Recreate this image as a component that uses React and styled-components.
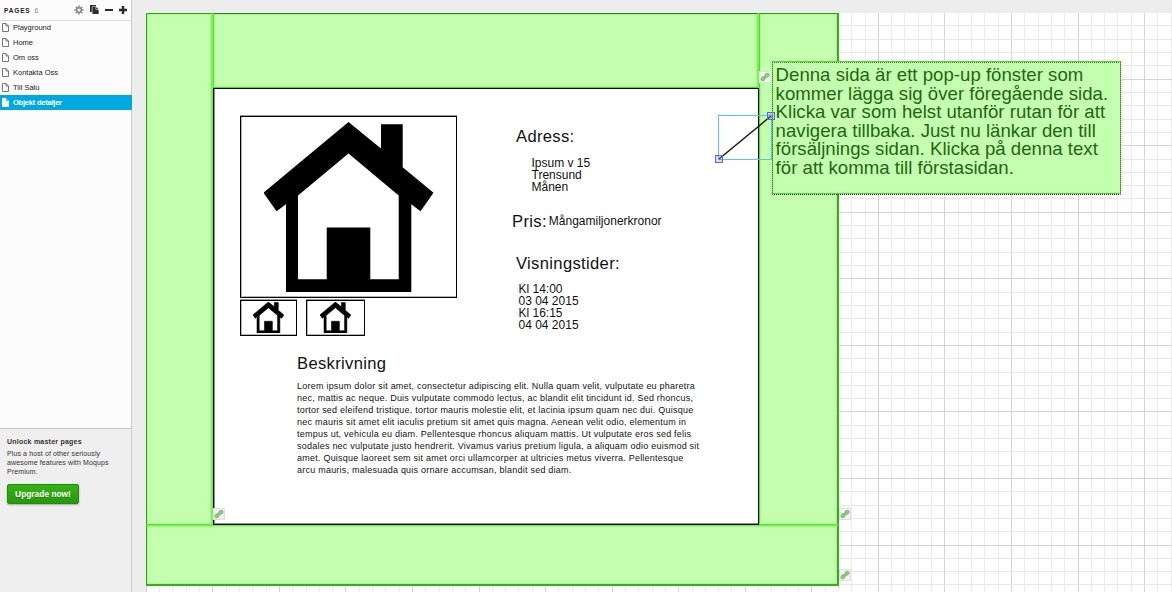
import React from "react";
import styled, { createGlobalStyle } from "styled-components";

const Global = createGlobalStyle`
  * { box-sizing: border-box; }
  body { margin: 0; overflow: hidden; font-family: "Liberation Sans", Arial, sans-serif; }
  svg { display: block; flex: none; }
`;

const Shell = styled.div`
  display: flex;
  width: 1172px;
  height: 592px;
  background: #ededed;
`;

const Sidebar = styled.aside`
  display: flex;
  flex-direction: column;
  width: 132px;
  flex: none;
  background: linear-gradient(to left, #c9c9c9 1px, #fcfcfc 1px);
`;

const SidebarHeader = styled.header`
  display: flex;
  align-items: center;
  height: 21px;
  width: 131px;
  padding: 0 4px 1px 4px;
  border-bottom: 1px solid #dcdcdc;
`;

const HeaderTitle = styled.h1`
  margin: 1px 0 0;
  flex: 1;
  font-size: 6.5px;
  font-weight: bold;
  letter-spacing: 0.85px;
  color: #222;
`;

const PageCount = styled.span`
  margin-left: 4px;
  font-size: 7px;
  font-weight: normal;
  color: #888;
`;

const HeaderTools = styled.div`
  display: flex;
  align-items: center;
  gap: 6px;
`;

const PageList = styled.nav`
  display: flex;
  flex-direction: column;
  flex: 1;
  margin-top: -1px;
`;

const PageRow = styled.a`
  display: flex;
  align-items: center;
  gap: 4px;
  height: 15px;
  padding-left: 2px;
  font-size: 7.5px;
  line-height: 15px;
  white-space: nowrap;
  color: ${(p) => (p.$active ? "#fff" : "#222")};
  font-weight: ${(p) => (p.$active ? "bold" : "normal")};
  letter-spacing: ${(p) => (p.$active ? "-0.22px" : "0")};
  background: ${(p) => (p.$active ? "#00a8e1" : "transparent")};
`;

const Promo = styled.section`
  display: flex;
  flex-direction: column;
  align-items: flex-start;
  width: 131px;
  height: 164px;
  padding: 8px 7px;
  border-top: 1px solid #c9c9c9;
  background: #efefef;
`;

const PromoTitle = styled.h2`
  margin: 0;
  font-size: 7px;
  line-height: 9px;
  letter-spacing: 0.23px;
  color: #333;
`;

const PromoText = styled.p`
  margin: 3px 0 8px;
  font-size: 7px;
  line-height: 9px;
  letter-spacing: 0.11px;
  white-space: pre;
  color: #333;
`;

const UpgradeButton = styled.button`
  width: 72px;
  height: 20px;
  padding: 0;
  border: 1px solid #1f8c0b;
  border-radius: 2px;
  background: linear-gradient(#35b215, #27980c);
  box-shadow: 0 1px 2px rgba(0, 0, 0, 0.3);
  color: #fff;
  font: bold 8.4px/18px "Liberation Sans", Arial, sans-serif;
  text-shadow: 0 1px 0 rgba(0, 0, 0, 0.25);
`;

const Workspace = styled.main`
  flex: 1;
  display: flex;
  padding: 13px 0 0 14px;
  overflow: hidden;
`;

const Canvas = styled.div`
  position: relative;
  flex: 1;
  background: #fff;
`;

const Placed = styled.div`
  position: absolute;
  left: ${(p) => p.$x - 146}px;
  top: ${(p) => p.$y - 13}px;
`;

/* Four clickable areas around the popup. */
const Backdrop = styled.div`
  position: relative;
  display: grid;
  grid-template: 75px 437px 61px / 67px 546px 80px;
  width: 693px;
  height: 573px;
`;

const Hotspot = styled.div`
  grid-area: ${(p) => p.$area};
  background: #c3ffae;
  border-style: solid;
  border-width: ${(p) => p.$bw};
  border-color: ${(p) => p.$bc};
  box-shadow: inset 0 0 0 1px rgba(125, 240, 90, 0.4);
`;

const Popup = styled.article`
  grid-area: 2 / 2;
  display: flex;
  flex-direction: column;
  padding: 27px 26px;
  background: #fff;
  border: 1px solid #000;
  box-shadow: inset 1px -1px 0 #909090;
`;

const Summary = styled.div`
  display: flex;
  gap: 55px;
`;

const Gallery = styled.div`
  display: flex;
  flex-direction: column;
  gap: 2px;
  width: 217px;
`;

const Thumbs = styled.div`
  display: flex;
  gap: 9px;
`;

const Picture = styled.figure`
  display: flex;
  justify-content: center;
  margin: 0;
  width: ${(p) => p.$w}px;
  height: ${(p) => p.$h}px;
  padding-top: ${(p) => p.$pad}px;
  border: 1px solid #000;
  background: #fff;
  box-shadow: 0 -1px 0 #999, inset 1px -1px 0 #b5b5b5;
`;

const Details = styled.div`
  display: flex;
  flex-direction: column;
  height: 220px;
  padding-top: 11px;
`;

const Heading = styled.h2`
  margin: 0;
  padding-left: ${(p) => p.$indent || 0}px;
  font-size: 16.6px;
  font-weight: normal;
  line-height: 20px;
  letter-spacing: 0.33px;
  white-space: nowrap;
  color: #111;
`;

const Detail = styled.p`
  margin: 0;
  padding: ${(p) => p.$pad};
  font-size: 12px;
  line-height: 12px;
  white-space: pre;
  color: #111;
`;

const PriceRow = styled.div`
  display: flex;
  align-items: flex-start;
  gap: 2px;
`;

const Description = styled.section`
  display: flex;
  flex-direction: column;
  gap: 6px;
  margin-top: 18px;
  padding-left: 57px;
`;

const DescriptionText = styled.p`
  margin: 0;
  font-size: 9px;
  line-height: 12px;
  letter-spacing: 0.232px;
  white-space: pre;
  color: #111;
`;

const Note = styled(Placed)`
  width: 349px;
  height: 133px;
  padding: 4px 0 0 2.6px;
  border: 1px solid #4fd92c;
  background: #c3ffae;
  font-size: 18.6px;
  line-height: 18.6px;
  letter-spacing: 0.02px;
  white-space: pre;
  color: #256511;

  &::after {
    content: "";
    position: absolute;
    inset: 0 -1px -2px -1px;
    border: 1px dotted #2c8a1a;
    border-bottom-color: #222;
  }
`;

const Badge = styled(Placed)`
  display: flex;
  align-items: center;
  justify-content: center;
  width: 12px;
  height: 12px;
  border: 1px solid #e0e0e0;
  background: rgba(242, 242, 242, 0.92);
`;

const Overlay = styled.svg`
  position: absolute;
  left: ${(p) => p.$x - 146}px;
  top: ${(p) => p.$y - 13}px;
`;

const HouseDrawing = ({ size }) => (
  <svg width={size} height={size} viewBox="0 0 170 169.5" preserveAspectRatio="none">
    <path
      fillRule="evenodd"
      d="M84.5 0L-.5 70.5L12.5 89L22 82V169.5H147.3V82L156.5 89L169.5 70.5L138.7 45V2.3H117V26.5ZM84.5 31.5L134.7 73.3V156.7H106.3V105.3H62.7V156.7H34V73.3Z"
      stroke="#000"
      strokeWidth={size < 50 ? 3 : 0}
    />
  </svg>
);

const DocIcon = ({ active }) => (
  <svg width="7" height="9" viewBox="0 0 7 9">
    <path
      d="M.5 .5H4L6.5 3V8.5H.5ZM4 .5V3H6.5"
      fill="#fff"
      stroke={active ? "#fff" : "#777"}
      strokeWidth="1"
    />
    {active && <path d="M4 0L7 3H4Z" fill="#00a8e1" opacity=".6" />}
  </svg>
);

const GearIcon = () => (
  <svg width="10" height="10" viewBox="-5 -5 10 10" stroke="#8c8c8c" fill="none">
    <circle r="2.4" strokeWidth="1.6" />
    {[0, 45, 90, 135].map((a) => (
      <g key={a} transform={`rotate(${a})`} strokeWidth="1.3">
        <path d="M0 -4.7V-2.8M0 2.8V4.7" />
      </g>
    ))}
  </svg>
);

const DuplicateIcon = () => (
  <svg width="9" height="9" viewBox="0 0 9 9" fill="#2b2b2b">
    <path d="M0 0H6V1.4H1.8V7H0Z" />
    <path d="M2.4 2H5.6V4.8H8.6V9H2.4Z" />
    <path d="M6.2 2L8.6 4.2H6.2Z" />
  </svg>
);

const MinusIcon = () => (
  <svg width="8" height="8" viewBox="0 0 8 8">
    <path d="M0 3H8V5H0Z" fill="#2b2b2b" />
  </svg>
);

const PlusIcon = () => (
  <svg width="8" height="8" viewBox="0 0 8 8">
    <path d="M0 2.8H2.8V0H5.2V2.8H8V5.2H5.2V8H2.8V5.2H0Z" fill="#2b2b2b" />
  </svg>
);

const LinkBadge = ({ x, y }) => (
  <Badge $x={x} $y={y}>
    <svg width="10" height="10" viewBox="-5 -5 10 10" fill="#a9d09c" stroke="#86bd78" strokeWidth="1.6">
      <g transform="rotate(-42)">
        <rect x="-4.5" y="-1.3" width="3.8" height="2.6" rx="1.3" />
        <rect x="0.7" y="-1.3" width="3.8" height="2.6" rx="1.3" />
        <path d="M-1.8 0H1.8" />
      </g>
    </svg>
  </Badge>
);

const GRID = 13.31;

const Grid = () => (
  <Overlay $x={146} $y={13} width="1026" height="579" shapeRendering="crispEdges">
    {Array.from({ length: 78 }, (_, i) => (
      <rect key={`v${i}`} x={Math.floor(0.3 + i * GRID)} y="0" width="1" height="579" fill={i % 5 ? "#ececec" : "#d4d4d4"} />
    ))}
    {Array.from({ length: 44 }, (_, i) => (
      <rect key={`h${i}`} x="0" y={Math.floor(i * GRID - 0.35)} width="1026" height="1" fill={i % 5 ? "#e8e8e8" : "#d4d4d4"} />
    ))}
  </Overlay>
);

const pages = ["Playground", "Home", "Om oss", "Kontakta Oss", "Till Salu", "Objekt detaljer"];

const description = `Lorem ipsum dolor sit amet, consectetur adipiscing elit. Nulla quam velit, vulputate eu pharetra
nec, mattis ac neque. Duis vulputate commodo lectus, ac blandit elit tincidunt id. Sed rhoncus,
tortor sed eleifend tristique, tortor mauris molestie elit, et lacinia ipsum quam nec dui. Quisque
nec mauris sit amet elit iaculis pretium sit amet quis magna. Aenean velit odio, elementum in
tempus ut, vehicula eu diam. Pellentesque rhoncus aliquam mattis. Ut vulputate eros sed felis
sodales nec vulputate justo hendrerit. Vivamus varius pretium ligula, a aliquam odio euismod sit
amet. Quisque laoreet sem sit amet orci ullamcorper at ultricies metus viverra. Pellentesque
arcu mauris, malesuada quis ornare accumsan, blandit sed diam.`;

const noteText = `Denna sida är ett pop-up fönster som
kommer lägga sig över föregående sida.
Klicka var som helst utanför rutan för att
navigera tillbaka. Just nu länkar den till
försäljnings sidan. Klicka på denna text
för att komma till förstasidan.`;

export default function App() {
  return (
    <Shell>
      <Global />
      <Sidebar>
        <SidebarHeader>
          <HeaderTitle>
            PAGES<PageCount>6</PageCount>
          </HeaderTitle>
          <HeaderTools>
            <GearIcon />
            <DuplicateIcon />
            <MinusIcon />
            <PlusIcon />
          </HeaderTools>
        </SidebarHeader>
        <PageList>
          {pages.map((name, i) => (
            <PageRow key={name} $active={i === 5}>
              <DocIcon active={i === 5} />
              {name}
            </PageRow>
          ))}
        </PageList>
        <Promo>
          <PromoTitle>Unlock master pages</PromoTitle>
          <PromoText>{"Plus a host of other seriously\nawesome features with Moqups\nPremium."}</PromoText>
          <UpgradeButton>Upgrade now!</UpgradeButton>
        </Promo>
      </Sidebar>
      <Workspace>
        <Canvas>
          <Grid />
          <Backdrop>
            <Hotspot $area="1 / 1 / 3 / 2" $bw="1px 2px 1px 1px" $bc="#2fa512 #7bf056 #62e63c #2fa512" />
            <Hotspot $area="1 / 2 / 2 / 3" $bw="1px 2px 1px 1px" $bc="#2c7d1b #7bf056 #4fdc28 #5fdd3c" />
            <Hotspot $area="1 / 3 / 3 / 4" $bw="1px 2px 1px 1px" $bc="#2fa512 #3aa81f #62e63c #4fdc28" />
            <Hotspot $area="3 / 1 / 4 / 4" $bw="1px 2px 2px 1px" $bc="#70ee48 #3aa81f #3aad1f #2fa512" />
            <Popup>
              <Summary>
                <Gallery>
                  <Picture $w={217} $h={182} $pad={5}>
                    <HouseDrawing size={170} />
                  </Picture>
                  <Thumbs>
                    <Picture $w={57} $h={36} $pad={1}>
                      <HouseDrawing size={31} />
                    </Picture>
                    <Picture $w={59} $h={36} $pad={1}>
                      <HouseDrawing size={31} />
                    </Picture>
                  </Thumbs>
                </Gallery>
                <Details>
                  <Heading $indent={4}>Adress:</Heading>
                  <Detail $pad="10px 0 19px 19.5px">{"Ipsum v 15\nTrensund\nMånen"}</Detail>
                  <PriceRow>
                    <Heading>Pris:</Heading>
                    <Detail $pad="3px 0 27px">Mångamiljonerkronor</Detail>
                  </PriceRow>
                  <Heading $indent={4}>Visningstider:</Heading>
                  <Detail $pad="9px 0 0 6.5px">{"Kl 14:00\n03 04 2015\nKl 16:15\n04 04 2015"}</Detail>
                </Details>
              </Summary>
              <Description>
                <Heading>Beskrivning</Heading>
                <DescriptionText>{description}</DescriptionText>
              </Description>
            </Popup>
          </Backdrop>

          <Note $x={772} $y={61}>{noteText}</Note>

          <Overlay $x={714} $y={111} width="62" height="53">
            <rect x="4.5" y="4.5" width="53" height="44" fill="none" stroke="#57c4ea" />
            <path d="M5 48L57 5" stroke="#111" strokeWidth="1.4" />
            <rect x="1.5" y="44.5" width="7" height="7" fill="#8f80ff" fillOpacity=".3" stroke="#6f5ce8" />
            <rect x="53.5" y="1.5" width="7" height="7" fill="#8f80ff" fillOpacity=".3" stroke="#6f5ce8" />
          </Overlay>

          <LinkBadge x={759} y={71} />
          <LinkBadge x={213} y={508} />
          <LinkBadge x={839} y={508} />
          <LinkBadge x={839} y={569} />
        </Canvas>
      </Workspace>
    </Shell>
  );
}
